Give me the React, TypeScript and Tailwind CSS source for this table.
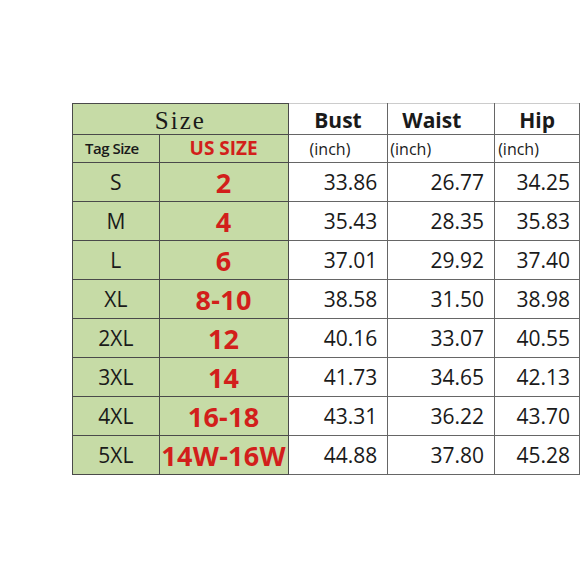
import React from "react";

const rows = [
  ["S", "2", "33.86", "26.77", "34.25"],
  ["M", "4", "35.43", "28.35", "35.83"],
  ["L", "6", "37.01", "29.92", "37.40"],
  ["XL", "8-10", "38.58", "31.50", "38.98"],
  ["2XL", "12", "40.16", "33.07", "40.55"],
  ["3XL", "14", "41.73", "34.65", "42.13"],
  ["4XL", "16-18", "43.31", "36.22", "43.70"],
  ["5XL", "14W-16W", "44.88", "37.80", "45.28"],
];

export default function App() {
  const g = "bg-[#c6dba6] border border-[#4a4a4a]";
  const w = "bg-white border border-[#666]";
  return (
    <div
      className="w-[580px] h-[580px] bg-white pt-[103px] pl-[72px] overflow-hidden"
      style={{ fontFamily: '"Open Sans", "Noto Sans", sans-serif' }}
    >
      <table className="table-fixed border-collapse text-[#1a1a1a]">
        <colgroup>
          <col className="w-[87px]" />
          <col className="w-[129px]" />
          <col className="w-[100px]" />
          <col className="w-[107px]" />
          <col className="w-[85px]" />
        </colgroup>
        <tbody>
          <tr className="h-[31px]">
            <td
              colSpan={2}
              className={`${g} text-center text-[25px] leading-none tracking-[2px] pt-[2px]`}
              style={{ fontFamily: '"Liberation Serif", serif' }}
            >
              Size
            </td>
            <td className={`${w} border-t-[#ccc] text-center font-bold text-[21px] leading-none pt-[2px]`}>Bust</td>
            <td className={`${w} border-t-[#ccc] text-left pl-[14px] font-bold text-[21px] leading-none pt-[2px]`}>Waist</td>
            <td className={`${w} border-t-[#ccc] text-center font-bold text-[21px] leading-none pt-[2px]`}>Hip</td>
          </tr>
          <tr className="h-[28px]">
            <td className={`${g} text-center font-semibold text-[15px] leading-none pr-[8px] tracking-[-0.5px]`}>Tag Size</td>
            <td className={`${g} text-center font-bold text-[19px] leading-none text-[#d21f1b]`}>US SIZE</td>
            <td className={`${w} pl-[21px] text-[16px] leading-none`}>(inch)</td>
            <td className={`${w} pl-[2px] text-[16px] leading-none`}>(inch)</td>
            <td className={`${w} pl-[3px] text-[16px] leading-none`}>(inch)</td>
          </tr>
          {rows.map((r, i) => (
            <tr key={i} className="h-[39px]">
              <td className={`${g} text-center text-[21px] leading-none`}>{r[0]}</td>
              <td className={`${g} text-center font-bold text-[27px] leading-none text-[#d21f1b] whitespace-nowrap px-0 tracking-[0.3px]`}>
                {r[1]}
              </td>
              <td className={`${w} text-right pr-[10px] text-[21px] leading-none`}>{r[2]}</td>
              <td className={`${w} text-right pr-[10px] text-[21px] leading-none`}>{r[3]}</td>
              <td className={`${w} text-right pr-[9px] text-[21px] leading-none`}>{r[4]}</td>
            </tr>
          ))}
        </tbody>
      </table>
    </div>
  );
}
